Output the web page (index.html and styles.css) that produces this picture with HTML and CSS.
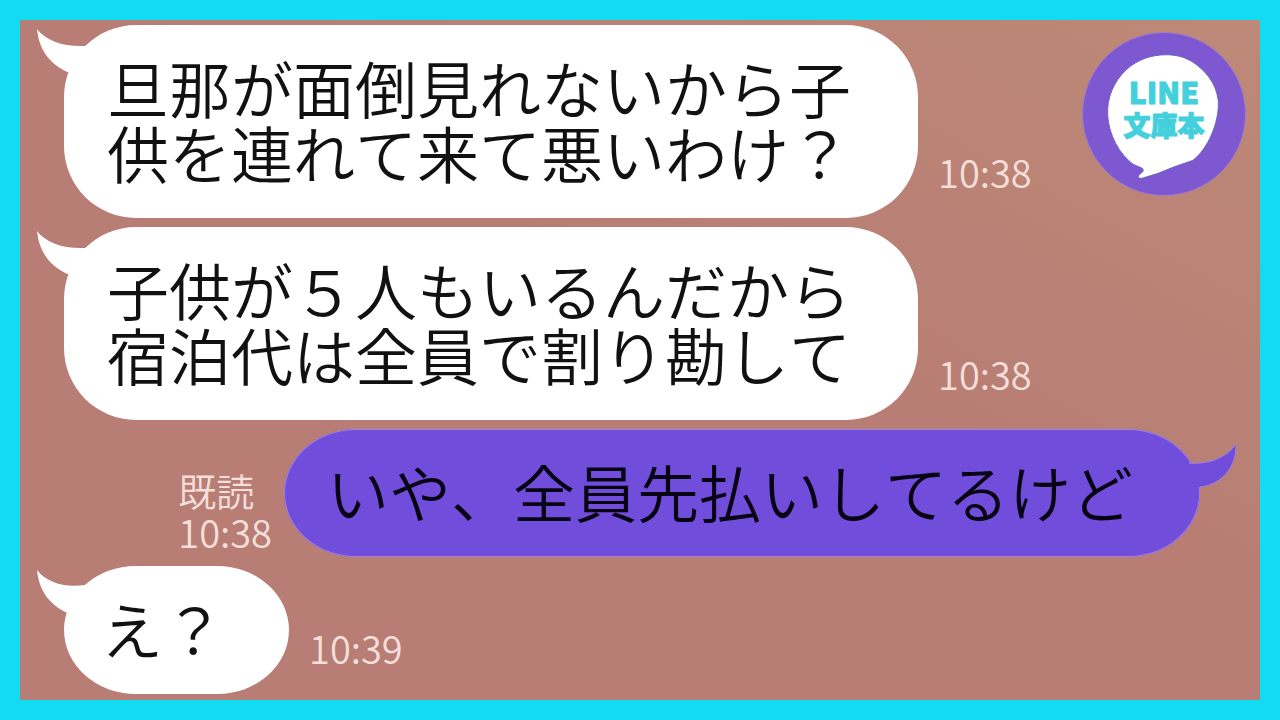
FILE: index.html
```html
<!DOCTYPE html>
<html lang="ja">
<head>
<meta charset="utf-8">
<title>LINE 文庫本</title>
<link rel="stylesheet" href="styles.css">
</head>
<body>
<main class="chat">
  <article class="message">
    <div class="bubble">
      <svg class="tail" viewBox="0 0 60 50" aria-hidden="true"><path d="M1 3C10 15 28 21 49 20L60 40L34 47C14 39 3 24 1 3Z"/></svg>
      <p>旦那が面倒見れないから子<br>供を連れて来て悪いわけ？</p>
    </div>
    <div class="meta"><time>10:38</time></div>
  </article>
  <article class="message">
    <div class="bubble">
      <svg class="tail" viewBox="0 0 60 50" aria-hidden="true"><path d="M1 3C10 15 28 21 49 20L60 40L34 47C14 39 3 24 1 3Z"/></svg>
      <p>子供が５人もいるんだから<br>宿泊代は全員で割り勘して</p>
    </div>
    <div class="meta"><time>10:38</time></div>
  </article>
  <article class="message sent">
    <div class="meta"><span>既読</span><time>10:38</time></div>
    <div class="bubble single">
      <svg class="tail" viewBox="0 0 60 50" aria-hidden="true"><path d="M11 23C32 25 50 16 58 4C59 26 44 45 22 47L2 46L0 24Z"/><path class="edge" d="M11 23C32 25 50 16 58 4C59 26 44 45 22 47"/></svg>
      <p>いや、全員先払いしてるけど</p>
    </div>
  </article>
  <article class="message">
    <div class="bubble single short">
      <svg class="tail" viewBox="0 0 60 50" aria-hidden="true"><path d="M1 3C10 15 28 21 49 18L60 40L34 47C14 39 3 24 1 3Z"/></svg>
      <p>え？</p>
    </div>
    <div class="meta"><time>10:39</time></div>
  </article>
  <div class="badge">
    <svg class="balloon" viewBox="0 0 164 164" aria-hidden="true"><path d="M84 22C69 22 55 27 44 37C31 49 24 66 25 83C26 103 37 123 51 133L60 137Q63 140 57 143Q54 148 60 147Q76 143 91 136L111 129C126 118 138 91 137 69C135 49 122 37 112 30C103 24 94 22 84 22Z"/></svg>
    <div class="logo"><span class="latin">LINE</span><span class="kanji">文庫本</span></div>
  </div>
</main>
</body>
</html>
```
FILE: styles.css
```css
* { box-sizing: border-box; }
body {
  margin: 0;
  background: #12dcf2;
  font-family: "Noto Sans CJK JP", sans-serif;
  font-weight: 350;
  font-kerning: none;
}
p { margin: 0; }
.chat {
  position: relative;
  min-height: 100vh;
  padding: 5px 60px 6px 44px;
  border: 20px solid #12dcf2;
  background: linear-gradient(to top right, #b87d74 55%, #bd8978) padding-box;
  display: flex;
  flex-direction: column;
  gap: 9px;
}
.message { display: flex; align-items: flex-end; gap: 20px; }
.bubble {
  position: relative;
  padding: 30px 67px 33px 43px;
  border-radius: 72px;
  background: #fff;
  color: #111;
  font-size: 62px;
  line-height: 65px;
  white-space: nowrap;
}
.single { border-radius: 72px / 64px; }
.short { padding-left: 37px; padding-right: 64px; }
.tail {
  position: absolute;
  left: -28px;
  top: 1px;
  width: 60px;
  height: 50px;
  fill: #fff;
}
.meta {
  display: flex;
  flex-direction: column;
  padding-bottom: 25px;
  color: #f5dfda;
  font-size: 38px;
  line-height: 42px;
}
.sent { justify-content: flex-end; gap: 12px; }
.sent .meta { padding-bottom: 4px; }
.sent .bubble {
  background: #704dda;
  color: #080312;
  box-shadow: inset 0 0 0 1px #a381df;
}
.sent .tail { left: auto; right: -38px; top: 11px; fill: #704dda; }
.edge { fill: none; stroke: #a381df; }
.badge {
  position: absolute;
  top: 12px;
  right: 14px;
  width: 164px;
  height: 164px;
  border: 1px solid #a37bc9;
  border-radius: 50%;
  background: #7e58d0;
}
.balloon {
  position: absolute;
  inset: 0;
  fill: #fff;
  stroke: #6b63c4;
}
.logo {
  position: relative;
  display: flex;
  flex-direction: column;
  align-items: center;
  padding-top: 41px;
  color: #43cfdc;
  font-weight: 900;
  -webkit-text-stroke: 1px #43cfdc;
  stroke-linejoin: round;
}
.latin { font-size: 30px; line-height: 34px; }
.kanji { font-size: 27px; line-height: 34px; }
```
